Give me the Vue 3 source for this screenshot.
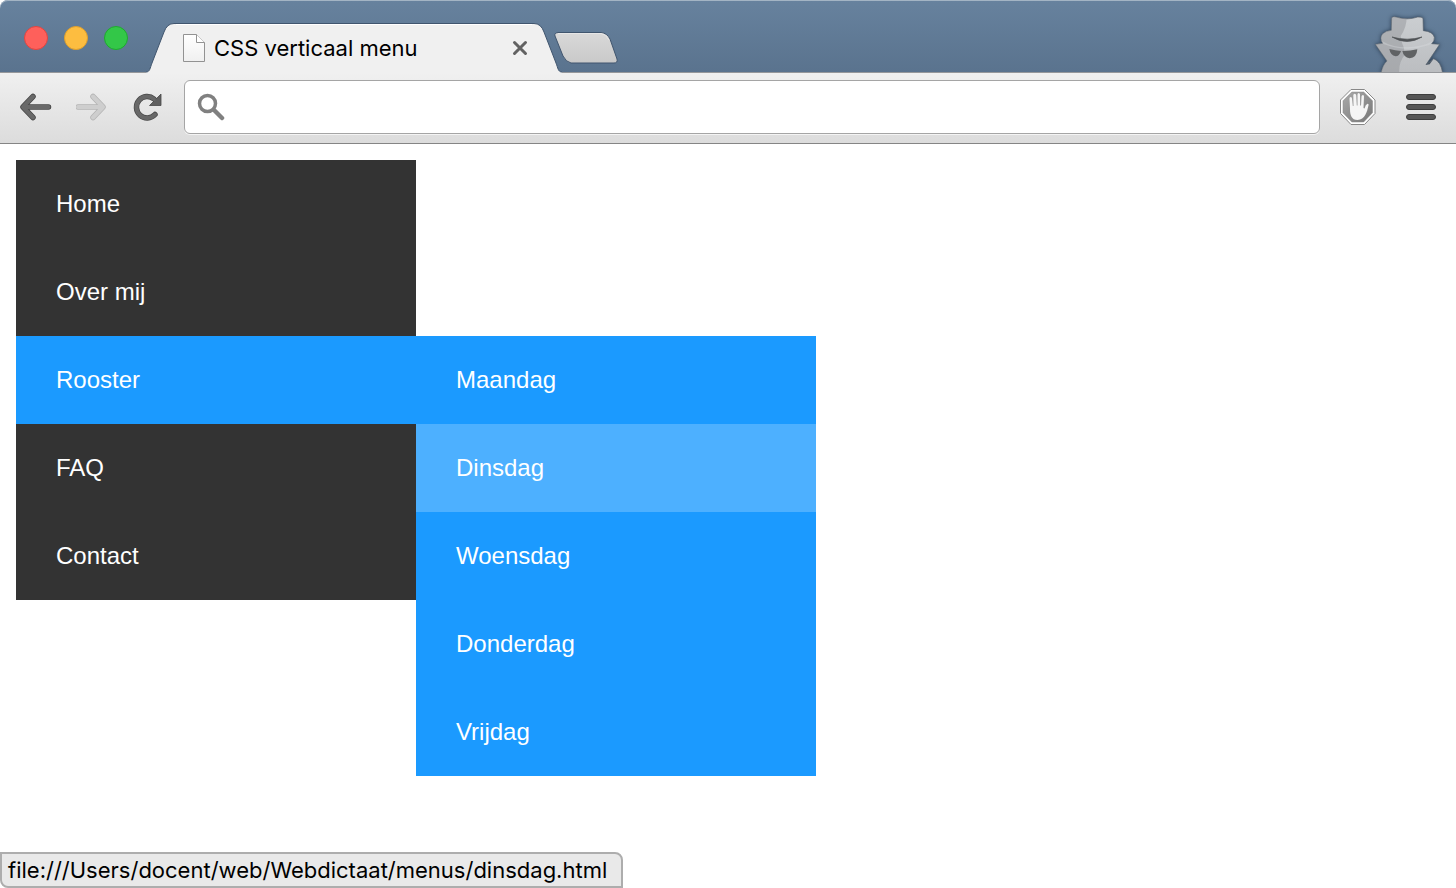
<script setup>
import { ref } from 'vue'

const address = ref('')
const days = [
  { label: 'Maandag', href: '#maandag' },
  { label: 'Dinsdag', href: '#dinsdag', active: true },
  { label: 'Woensdag', href: '#woensdag' },
  { label: 'Donderdag', href: '#donderdag' },
  { label: 'Vrijdag', href: '#vrijdag' },
]
const items = [
  { label: 'Home', href: '#home' },
  { label: 'Over mij', href: '#over-mij' },
  { label: 'Rooster', href: '#rooster', active: true, children: days },
  { label: 'FAQ', href: '#faq' },
  { label: 'Contact', href: '#contact' },
]
</script>

<template>
  <div class="window">
    <header class="titlebar">
      <div class="lights">
        <button class="light red" aria-label="Sluiten"></button>
        <button class="light yellow" aria-label="Minimaliseren"></button>
        <button class="light green" aria-label="Zoomen"></button>
      </div>

      <div class="tab">
        <svg width="30" height="51" viewBox="0 0 30 51" aria-hidden="true">
          <path d="M0 51V50C4 50 4 46 6 41L18 10Q21 1.500 28 1.500H30V51Z" fill="#f0f0f0" />
          <path d="M0 50C4 50 4 46 6 41L18 10Q21 1.500 28 1.500H30" fill="none" stroke="#40556e" />
        </svg>
        <div class="tab-body">
          <svg width="24" height="30" viewBox="0 0 24 30" aria-hidden="true">
            <defs>
              <linearGradient id="sheet" x1="0" y1="0" x2="0" y2="1">
                <stop offset="0" stop-color="#fff" />
                <stop offset="1" stop-color="#f0f0f0" />
              </linearGradient>
            </defs>
            <path d="M1.500 1.500H14.500L22.500 9.500V28.500H1.500Z" fill="url(#sheet)" stroke="#929292" />
            <path d="M14.500 1.500V9.500H22.500" fill="#fff" stroke="#929292" />
          </svg>
          <span class="tab-title">CSS verticaal menu</span>
          <button class="tab-close" aria-label="Tabblad sluiten">
            <svg width="16" height="16" viewBox="0 0 16 16">
              <path d="M2.500 2.500L13.500 13.500M13.500 2.500L2.500 13.500" stroke="#626262" stroke-width="3" stroke-linecap="round" />
            </svg>
          </button>
        </div>
        <svg width="30" height="51" viewBox="0 0 30 51" aria-hidden="true">
          <path d="M30 51V50C26 50 26 46 24 41L12 10Q9 1.500 2 1.500H0V51Z" fill="#f0f0f0" />
          <path d="M30 50C26 50 26 46 24 41L12 10Q9 1.500 2 1.500H0" fill="none" stroke="#40556e" />
        </svg>
      </div>

      <button class="new-tab" aria-label="Nieuw tabblad">
        <svg width="66" height="34" viewBox="0 0 66 34">
          <defs>
            <linearGradient id="newtab" x1="0" y1="0" x2="0" y2="1">
              <stop offset="0" stop-color="#d9d9d9" />
              <stop offset="1" stop-color="#c9c9c9" />
            </linearGradient>
          </defs>
          <path d="M5 1.500H48Q54 2 57 8L64 28Q65 32 61 32H18Q13 31 10 25L2 5Q1 2 5 1.500Z" fill="url(#newtab)" stroke="#40556e" />
          <path d="M5 2.500H48Q53 3 56 9" fill="none" stroke="#e6e6e6" />
        </svg>
      </button>

      <svg class="incognito" width="80" height="62" viewBox="222 30 240 186" role="img" aria-label="Incognito">
        <defs>
          <linearGradient id="spy" x1="0" y1="0" x2="0" y2="1">
            <stop offset="0" stop-color="#cbced1" />
            <stop offset="1" stop-color="#bbbdc0" />
          </linearGradient>
          <clipPath id="spy-shape">
            <path d="M287 53Q293 48 300 51Q334 62 365 51Q377 50 381 55L382 92Q412 95 415 112Q416 124 407 131L431 133L390 194L413 176Q435 184 440 220H255Q260 194 273 183L238 133L260 130Q249 114 260 101Q270 92 286 91Z" />
          </clipPath>
        </defs>
        <path class="spy-shadow" d="M287 53Q293 48 300 51Q334 62 365 51Q377 50 381 55L382 92Q412 95 415 112Q416 124 407 131L431 133L390 194L413 176Q435 184 440 220H255Q260 194 273 183L238 133L260 130Q249 114 260 101Q270 92 286 91Z" fill="url(#spy)" stroke="#59636e" stroke-width="2" />
        <g clip-path="url(#spy-shape)">
          <path d="M230 40H331Q336 76 314 108L318 128L324 145L326 165Q307 188 310 220H230Z" fill="#8d9195" opacity="0.450" />
          <path d="M256 122Q290 142 332 142Q378 141 410 124Q406 132 398 136Q330 158 262 132Z" fill="#dddfe1" opacity="0.350" />
        </g>
        <path d="M288 111Q333 138 378 111Q334 124 288 111Z" fill="#505356" stroke="#505356" stroke-width="2" />
        <path d="M280 147Q298 151 315 153Q310 169 299 169Q283 166 280 147ZM319 153Q344 153 364 148Q362 174 341 175Q323 172 319 153Z" fill="#606264" />
        <path d="M389 195L413 176L401 193Z" fill="#4b5765" />
      </svg>
    </header>

    <div class="toolbar">
      <nav class="controls" aria-label="Navigatie">
        <button aria-label="Terug">
          <svg width="32" height="30" viewBox="0 0 32 30">
            <path d="M13 4.500L3 15L13 25.500M4 15H28.500" fill="none" stroke="#454545" stroke-width="5.500" stroke-linecap="round" stroke-linejoin="round" />
            <path d="M13 4.500L3 15L13 25.500M4 15H28.500" fill="none" stroke="#696969" stroke-width="4" stroke-linecap="round" stroke-linejoin="round" />
          </svg>
        </button>
        <button aria-label="Vooruit" disabled>
          <svg width="32" height="30" viewBox="0 0 32 30">
            <path d="M17 4.500L27 15L17 25.500M26 15H2" fill="none" stroke="#b4b4b4" stroke-width="5.500" stroke-linecap="round" stroke-linejoin="round" />
            <path d="M17 4.500L27 15L17 25.500M26 15H2" fill="none" stroke="#cecece" stroke-width="4" stroke-linecap="round" stroke-linejoin="round" />
          </svg>
        </button>
        <button aria-label="Vernieuwen">
          <svg width="32" height="30" viewBox="0 0 32 30">
            <path d="M22 7A10.700 10.700 0 1 0 23 22.500" fill="none" stroke="#484848" stroke-width="5.500" stroke-linecap="round" />
            <path d="M29 2V13.500H17.500Z" fill="#606060" stroke="#484848" stroke-width="0.800" />
            <path d="M22 7A10.700 10.700 0 1 0 23 22.500" fill="none" stroke="#686868" stroke-width="4" stroke-linecap="round" />
          </svg>
        </button>
      </nav>

      <label class="omnibox">
        <svg width="28" height="28" viewBox="0 0 28 28" aria-hidden="true">
          <circle cx="10.500" cy="10.500" r="8" fill="none" stroke="#808080" stroke-width="3.500" />
          <path d="M17 17L25 25" stroke="#808080" stroke-width="4.500" stroke-linecap="round" />
        </svg>
        <input v-model="address" type="text" aria-label="Adres" />
      </label>

      <div class="actions">
        <button aria-label="Advertenties blokkeren">
          <svg width="36" height="36" viewBox="0 0 36 36">
            <defs>
              <linearGradient id="sign" x1="0" y1="0" x2="1" y2="1">
                <stop offset="0" stop-color="#aaa" />
                <stop offset="1" stop-color="#777" />
              </linearGradient>
            </defs>
            <path d="M11 0.500H24.500L35 11V24.500L24.500 35.500H11L0.500 24.500V11Z" fill="#fff" stroke="#888" />
            <path d="M11.800 3H23.700L32.500 11.800V23.700L23.700 33H11.800L3 23.700V11.800Z" fill="url(#sign)" stroke="#888" stroke-width="0.500" />
            <path d="M9.500 9.500Q9.500 8 10.700 8Q12 8 12 9.500L12.800 17H13.500L13.300 6.300Q13.300 4.700 14.700 4.700Q16 4.700 16.200 6.300L16.800 16.500H17.500V5.500Q17.500 4 18.700 4Q20 4 20 5.500L20.200 16.500H21L21.500 7.500Q21.700 6 22.900 6Q24.200 6.200 24 7.500L23.500 19L24.500 19.500Q25.500 15.500 27.500 14.700Q29 14.500 28.500 16.300C27 23 25 31 17.500 31C11.500 31 10 26 10 20Z" fill="#f5f5f5" />
          </svg>
        </button>
        <button aria-label="Menu">
          <svg width="30" height="28" viewBox="0 0 30 28">
            <g fill="#565656" stroke="#3e3e3e">
              <rect x="0.500" y="1.500" width="29" height="5" rx="2.500" />
              <rect x="0.500" y="11.500" width="29" height="5" rx="2.500" />
              <rect x="0.500" y="21.500" width="29" height="5" rx="2.500" />
            </g>
          </svg>
        </button>
      </div>
    </div>

    <main class="page">
      <nav aria-label="Hoofdmenu">
        <ul class="menu">
          <li v-for="item in items" :key="item.label" :class="{ active: item.active }">
            <a :href="item.href">{{ item.label }}</a>
            <ul v-if="item.children" class="menu submenu">
              <li v-for="child in item.children" :key="child.label" :class="{ active: child.active }">
                <a :href="child.href">{{ child.label }}</a>
              </li>
            </ul>
          </li>
        </ul>
      </nav>
    </main>

    <div class="status" role="status">file:///Users/docent/web/Webdictaat/menus/dinsdag.html</div>
  </div>
</template>

<style>
body {
  background: #fff;
}
</style>

<style scoped>
.window {
  position: relative;
  display: flex;
  flex-direction: column;
  min-height: 100vh;
  background: #fff;
  font-family: Inter, Roboto, "Liberation Sans", sans-serif;
}

button {
  display: flex;
  padding: 0;
  border: 0;
  background: none;
}

svg {
  display: block;
  flex: none;
}

.titlebar {
  display: flex;
  align-items: flex-end;
  height: 72px;
  border-radius: 8px 8px 0 0;
  background: linear-gradient(#67829e, #5a738e);
  box-shadow: inset 0 1px #a3b4c4;
}

.lights {
  display: flex;
  gap: 16px;
  padding: 0 18px 22px 24px;
}

.light {
  box-sizing: border-box;
  width: 24px;
  height: 24px;
  border: 1px solid;
  border-radius: 50%;
}

.red {
  border-color: #e2443f;
  background: #fe605b;
}

.yellow {
  border-color: #df9f2c;
  background: #fdbd40;
}

.green {
  border-color: #1fa92f;
  background: #33c748;
}

.tab {
  z-index: 1;
  display: flex;
  width: 416px;
  height: 51px;
  margin-bottom: -1px;
}

.tab-body {
  box-sizing: border-box;
  display: flex;
  flex: 1;
  align-items: center;
  margin-top: 1px;
  padding: 0 4px 1px 6px;
  border-top: 1px solid #40556e;
  background: linear-gradient(#fff 1px, #f0f0f0 1px, #f0f0f0);
}

.tab-title {
  flex: 1;
  margin-left: 8px;
  font-size: 22px;
  line-height: 28px;
  color: #000;
}

.new-tab {
  margin: 0 auto 7px -9px;
}

.incognito {
  margin-right: 6px;
}

.spy-shadow {
  filter: drop-shadow(0 0 6px #2c3f55);
}

.toolbar {
  box-sizing: border-box;
  display: flex;
  align-items: center;
  height: 72px;
  padding: 0 20px 2px;
  border-top: 1px solid #96989b;
  border-bottom: 1px solid #858585;
  background: linear-gradient(#f0f0f0, #dcdcdc);
}

.controls {
  display: flex;
  gap: 24px;
  margin-right: 20px;
}

.omnibox {
  box-sizing: border-box;
  display: flex;
  flex: 1;
  align-items: center;
  height: 54px;
  padding: 0 12px;
  border: 1px solid #a5a5a5;
  border-radius: 6px;
  background: #fff;
  box-shadow: 0 1px #f4f4f4;
}

.omnibox input {
  flex: 1;
  min-width: 0;
  height: 40px;
  padding: 0 8px;
  border: 0;
  outline: 0;
  background: transparent;
  font: 22px Inter, Roboto, sans-serif;
}

.actions {
  display: flex;
  gap: 30px;
  align-items: center;
  margin-left: 20px;
}

.page {
  flex: 1;
  padding: 16px;
  font-family: "Liberation Sans", Arial, sans-serif;
  font-size: 24px;
  line-height: 28px;
}

.menu {
  width: 400px;
  margin: 0;
  padding: 0;
  background: #333;
  list-style: none;
}

.menu li {
  position: relative;
}

.menu a {
  display: block;
  padding: 30px 40px;
  color: #fff;
  text-decoration: none;
}

.menu .active {
  background: #1b9aff;
}

.submenu {
  position: absolute;
  top: 0;
  left: 100%;
  background: #1b9aff;
}

.submenu .active {
  background: #4db0ff;
}

.status {
  position: absolute;
  bottom: 0;
  left: 0;
  padding: 2px 14px 2px 6px;
  border: 2px solid #adadad;
  border-radius: 0 8px 0 8px;
  background: #e9e9e9;
  color: #000;
  font-size: 22px;
  line-height: 28px;
}
</style>
